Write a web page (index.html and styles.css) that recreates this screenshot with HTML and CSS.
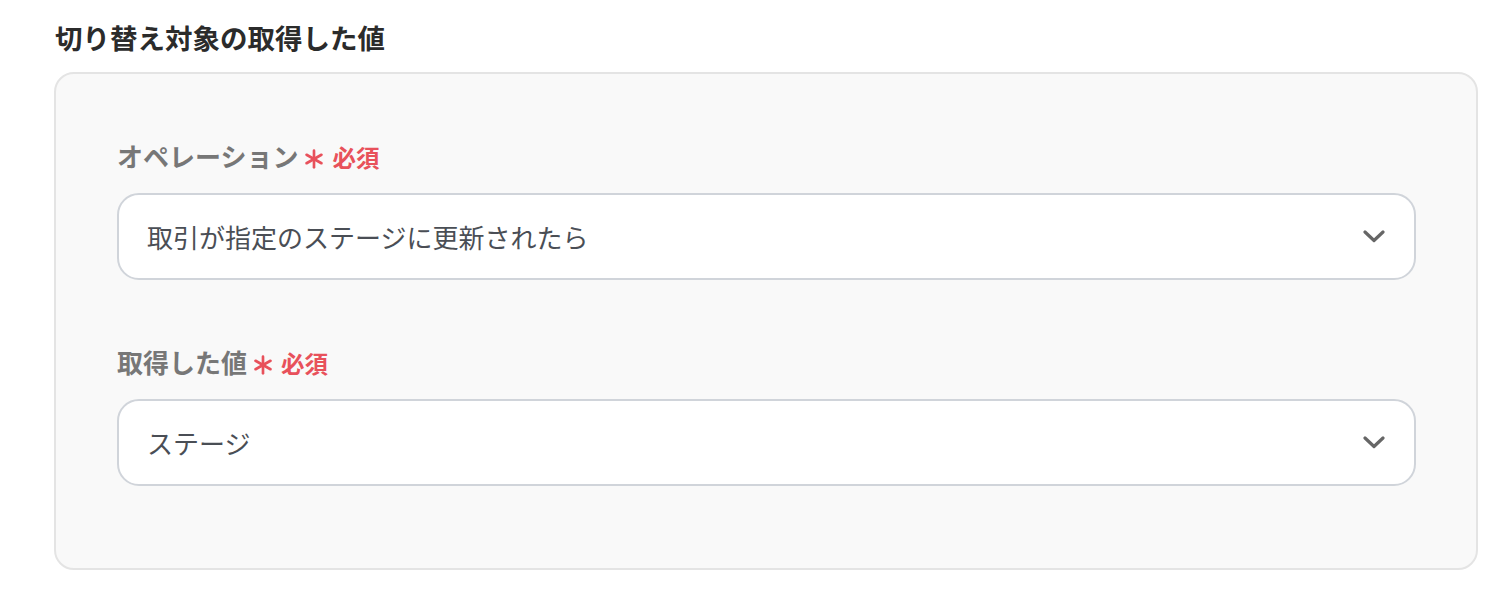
FILE: index.html
```html
<!DOCTYPE html>
<html lang="ja">
<head>
<meta charset="utf-8">
<link rel="stylesheet" href="styles.css">
</head>
<body>
<div class="page">
  <h2 class="title">切り替え対象の取得した値</h2>
  <div class="card">
    <div class="field">
      <div class="label">
        <span class="label-text">オペレーション</span>
        <svg class="ast" width="20" height="20" viewBox="0 0 18 18"><g stroke="#e8515b" stroke-width="2.4" stroke-linecap="round"><line x1="9" y1="1.5" x2="9" y2="16.5"/><line x1="2.3" y1="5.2" x2="15.7" y2="12.8"/><line x1="2.3" y1="12.8" x2="15.7" y2="5.2"/></g></svg>
        <span class="req">必須</span>
      </div>
      <div class="select">
        <span class="value">取引が指定のステージに更新されたら</span>
        <svg class="chev" width="22" height="13" viewBox="0 0 22 13"><polyline points="2,2 11,10.5 20,2" fill="none" stroke="#666" stroke-width="3.2" stroke-linecap="round" stroke-linejoin="round"/></svg>
      </div>
    </div>
    <div class="field">
      <div class="label">
        <span class="label-text">取得した値</span>
        <svg class="ast" width="20" height="20" viewBox="0 0 18 18"><g stroke="#e8515b" stroke-width="2.4" stroke-linecap="round"><line x1="9" y1="1.5" x2="9" y2="16.5"/><line x1="2.3" y1="5.2" x2="15.7" y2="12.8"/><line x1="2.3" y1="12.8" x2="15.7" y2="5.2"/></g></svg>
        <span class="req">必須</span>
      </div>
      <div class="select">
        <span class="value">ステージ</span>
        <svg class="chev" width="22" height="13" viewBox="0 0 22 13"><polyline points="2,2 11,10.5 20,2" fill="none" stroke="#666" stroke-width="3.2" stroke-linecap="round" stroke-linejoin="round"/></svg>
      </div>
    </div>
  </div>
</div>
</body>
</html>
```

FILE: styles.css
```css
* { box-sizing: border-box; }
html, body {
  margin: 0;
  background: #ffffff;
  font-family: "Noto Sans CJK JP", "Noto Sans", sans-serif;
}
.page {
  padding: 19px 30px 0 54px;
}
.title {
  margin: 0;
  font-size: 27.5px;
  line-height: 36px;
  font-weight: 700;
  color: #2b2b2b;
  padding-left: 1px;
}
.card {
  margin-top: 17px;
  width: 1424px;
  background: #f9f9f9;
  border: 2px solid #e4e4e4;
  border-radius: 20px;
  padding: 64px 60px 82px 61px;
  display: flex;
  flex-direction: column;
  gap: 64px;
}
.label {
  display: flex;
  align-items: center;
  height: 36px;
  margin-bottom: 19px;
}
.label-text {
  font-size: 26px;
  line-height: 36px;
  font-weight: 700;
  color: #777777;
}
.ast {
  margin-left: 6px;
  margin-top: 6px;
}
.req {
  margin-left: 8px;
  font-size: 23.5px;
  line-height: 36px;
  font-weight: 700;
  color: #e8515b;
  margin-top: 2px;
}
.select {
  height: 87px;
  background: #ffffff;
  border: 2px solid #d0d4da;
  border-radius: 22px;
  display: flex;
  align-items: center;
  justify-content: space-between;
  padding: 0 29px 0 28px;
}
.value {
  font-size: 26px;
  color: #4a4e55;
  line-height: 36px;
}
.chev {
  display: block;
}
```
